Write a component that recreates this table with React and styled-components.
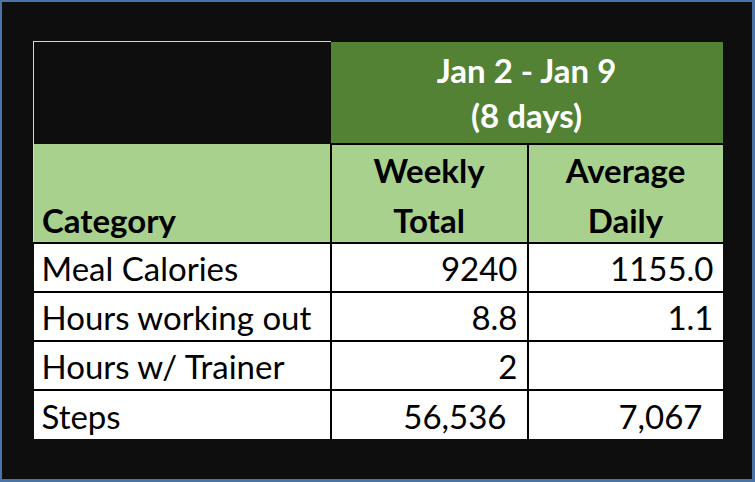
import React from 'react';
import styled, { createGlobalStyle } from 'styled-components';

const rows = [
  { name: 'Meal Calories', total: '9240', daily: '1155.0' },
  { name: 'Hours working out', total: '8.8', daily: '1.1' },
  { name: 'Hours w/ Trainer', total: '2', daily: '' },
  { name: 'Steps', total: '56,536', daily: '7,067', inset: true },
];

const GlobalStyle = createGlobalStyle`
  html, body {
    margin: 0;
    padding: 0;
    background: #0f0e0e;
  }
`;

const Frame = styled.div`
  box-sizing: border-box;
  width: 755px;
  height: 482px;
  background: #0f0e0e;
  border: 2px solid #4a74a8;
  border-right-width: 3px;
  border-bottom-width: 3px;
  padding: 39px 0 0 31px;
  font-family: Lato, 'Open Sans', sans-serif;
  font-size: 33px;
`;

const Table = styled.table`
  border-collapse: collapse;
  table-layout: fixed;
  width: 689px;
`;

const Corner = styled.th`
  width: 296px;
  height: 102px;
  padding: 0;
  background: #0f0e0e;
  border-top: 1px solid #d6d6d6;
  border-left: 1px solid #d6d6d6;
`;

const Period = styled.th`
  background: #548235;
  color: #fff;
  font-weight: 700;
  line-height: 45px;
  padding: 6px 0 0;
  vertical-align: top;
  border-bottom: 2px solid #000;
`;

const HeadCell = styled.th`
  box-sizing: border-box;
  height: 99px;
  background: #a9d18e;
  color: #000;
  font-weight: 700;
  line-height: 50px;
  text-align: ${({ $left }) => ($left ? 'left' : 'center')};
  padding: ${({ $left }) => ($left ? '0 0 0 8px' : '0')};
  vertical-align: bottom;
  border-left: ${({ $left }) => ($left ? '1px solid #d6d6d6' : '2px solid #000')};
  border-bottom: 2px solid #000;
  overflow: visible;
`;

const HeadLines = styled.span`
  display: block;
  margin-bottom: -3px;
`;

const Cell = styled.td`
  box-sizing: border-box;
  height: 49px;
  background: #fff;
  color: #000;
  line-height: 1;
  padding: ${({ $num, $inset }) =>
    $num ? `0 ${$inset ? 20 : 9}px 6px 0` : '0 0 6px 8px'};
  text-align: ${({ $num }) => ($num ? 'right' : 'left')};
  vertical-align: bottom;
  white-space: nowrap;
  border-top: 2px solid #000;
  border-left: 2px solid #000;

  &:first-child {
    border-left: none;
  }
`;

export default function App() {
  return (
    <>
      <GlobalStyle />
      <Frame>
        <Table>
          <colgroup>
            <col style={{ width: 297 }} />
            <col style={{ width: 197 }} />
            <col style={{ width: 195 }} />
          </colgroup>
          <thead>
            <tr>
              <Corner />
              <Period colSpan={2}>
                Jan 2 - Jan 9
                <br />
                (8 days)
              </Period>
            </tr>
            <tr>
              <HeadCell $left>
                <HeadLines>Category</HeadLines>
              </HeadCell>
              <HeadCell>
                <HeadLines>
                  Weekly
                  <br />
                  Total
                </HeadLines>
              </HeadCell>
              <HeadCell>
                <HeadLines>
                  Average
                  <br />
                  Daily
                </HeadLines>
              </HeadCell>
            </tr>
          </thead>
          <tbody>
            {rows.map((r) => (
              <tr key={r.name}>
                <Cell>{r.name}</Cell>
                <Cell $num $inset={r.inset}>{r.total}</Cell>
                <Cell $num $inset={r.inset}>{r.daily}</Cell>
              </tr>
            ))}
          </tbody>
        </Table>
      </Frame>
    </>
  );
}
